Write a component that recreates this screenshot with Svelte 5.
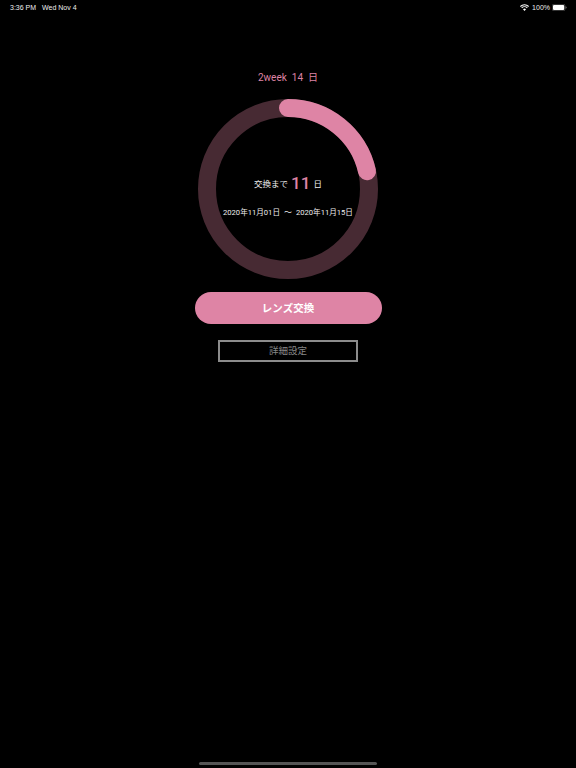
<script>
  const r = 81;
  const circumference = 2 * Math.PI * r;
  const progress = 3 / 14;
  const dash = `${circumference * progress} ${circumference}`;
</script>

<div class="page">
  <header class="status">
    <div class="status-left"><span>3:36 PM</span><span>Wed Nov 4</span></div>
    <div class="status-right">
      <svg class="wifi" width="9" height="7" viewBox="0 0 20 15" aria-hidden="true">
        <path d="M10 15 6.6 11.4a4.800 4.800 0 0 1 6.800 0Z" fill="#fff"/>
        <path d="M4.600 9.300 2.900 7.500a10 10 0 0 1 14.200 0l-1.700 1.800a7.600 7.600 0 0 0-10.800 0Z" fill="#fff"/>
        <path d="M1.600 6.200 0 4.400a14.200 14.200 0 0 1 20 0l-1.600 1.800a11.800 11.800 0 0 0-16.800 0Z" fill="#fff"/>
      </svg>
      <span>100%</span>
      <svg width="15" height="7" viewBox="0 0 15 7" aria-hidden="true">
        <rect x="0.25" y="0.25" width="12.700" height="6.500" rx="1.600" fill="none" stroke="#888" stroke-width="0.500"/>
        <rect x="1" y="1" width="11.200" height="5" rx="1" fill="#fff"/>
        <path d="M13.600 2.300c.6.1 1 .6 1 1.200s-.4 1.100-1 1.200Z" fill="#888"/>
      </svg>
    </div>
  </header>

  <main class="content">
    <h1 class="title"><span>2week</span><span>14</span><span>日</span></h1>

    <div class="ring">
      <svg width="180" height="180" viewBox="0 0 180 180" aria-hidden="true">
        <circle cx="90" cy="90" {r} fill="none" stroke="#472a33" stroke-width="18"/>
        <circle cx="90" cy="90" {r} fill="none" stroke="#de84a5" stroke-width="18" stroke-linecap="round"
          stroke-dasharray={dash} transform="rotate(-90 90 90)"/>
      </svg>
      <div class="ring-text">
        <div class="remain"><span>交換まで</span><strong>11</strong><span>日</span></div>
        <div class="range"><span>2020年11月01日</span><span class="tilde">〜</span><span>2020年11月15日</span></div>
      </div>
    </div>

    <button class="primary">レンズ交換</button>
    <button class="secondary">詳細設定</button>
  </main>

  <div class="home"></div>
</div>

<style>
  :global(body) {
    margin: 0;
    background: #000;
  }
  .page {
    width: 576px;
    height: 768px;
    background: #000;
    color: #fff;
    display: flex;
    flex-direction: column;
    overflow: hidden;
    font-family: "Liberation Sans", "Noto Sans CJK JP", sans-serif;
  }
  .status {
    height: 14px;
    padding: 0 9px 0 10px;
    display: flex;
    justify-content: space-between;
    align-items: center;
    font-size: 7px;
    color: #eee;
  }
  .status-left {
    display: flex;
    gap: 6px;
  }
  .status-right {
    display: flex;
    align-items: center;
    gap: 2px;
  }
  .wifi {
    margin-right: 1px;
  }
  .content {
    flex: 1;
    display: flex;
    flex-direction: column;
    align-items: center;
  }
  .title {
    margin: 57px 0 0;
    height: 14px;
    display: flex;
    align-items: center;
    gap: 5px;
    font-size: 10px;
    font-weight: 400;
    line-height: 14px;
    color: #de84a5;
    font-family: Roboto, "Noto Sans CJK JP", sans-serif;
  }
  .ring {
    margin-top: 14px;
    width: 180px;
    height: 180px;
    position: relative;
  }
  .ring svg {
    display: block;
  }
  .ring-text {
    position: absolute;
    inset: 0;
    display: flex;
    flex-direction: column;
    align-items: center;
    font-family: Roboto, "Noto Sans CJK JP", sans-serif;
    font-size: 8.5px;
    color: #eee;
  }
  .remain {
    margin-top: 72px;
    height: 24px;
    display: flex;
    align-items: center;
    gap: 3px;
  }
  .remain strong {
    font-size: 17px;
    font-weight: 500;
    color: #de84a5;
  }
  .range {
    margin-top: 9px;
    height: 14px;
    display: flex;
    align-items: center;
    font-size: 7.6px;
    gap: 4px;
  }
  .tilde {
    font-size: 8px;
  }
  button {
    font-family: "Noto Sans CJK JP", sans-serif;
    padding: 0;
    cursor: pointer;
  }
  .primary {
    margin-top: 13px;
    width: 187px;
    height: 32px;
    padding-bottom: 2px;
    border: 0;
    border-radius: 16px;
    background: #de84a5;
    color: #fff;
    font-size: 10.5px;
    font-weight: 700;
  }
  .secondary {
    margin-top: 16px;
    width: 140px;
    height: 22px;
    padding-bottom: 2px;
    background: transparent;
    border: 2px solid #8c8c8c;
    color: #888;
    font-size: 9.5px;
  }
  .home {
    width: 178px;
    height: 3px;
    margin: 0 auto 3px;
    border-radius: 2px;
    background: #555;
  }
</style>
